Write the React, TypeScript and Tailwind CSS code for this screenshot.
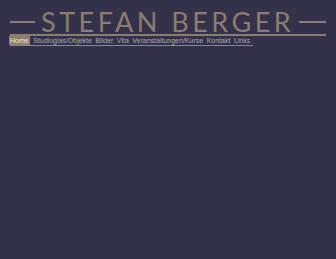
export default function App() {
  const nav = [
    "Home",
    "Studioglas/Objekte",
    "Bilder",
    "Vita",
    "Veranstaltungen/Kurse",
    "Kontakt",
    "Links",
  ];

  return (
    <div className="min-h-[259px] w-full bg-[#34324a] pl-[10px] pt-[9px]">
      <div className="w-[316px]">
        <div className="flex h-[25px] items-center">
          <div className="h-[2px] w-[25px] shrink-0 bg-[#8c7e6e]" />
          <h1
            className="ml-[6px] whitespace-nowrap text-[27px] font-normal leading-none tracking-[3.5px] text-[#8c7e6e]"
            style={{ fontFamily: "Lato, sans-serif" }}
          >
            STEFAN BERGER
          </h1>
          <div className="ml-auto h-[2px] w-[27px] shrink-0 bg-[#8c7e6e]" />
        </div>
        <div className="h-[2px] w-full bg-[#8c7e6e]" />
      </div>
      <nav
        className="flex w-[243px] gap-[3.5px] whitespace-nowrap border-b border-[#8a8596] text-[7px] leading-[9px] text-[#aaa6ba]"
        style={{ fontFamily: '"Liberation Sans", sans-serif' }}
      >
        {nav.map((item, i) => (
          <a
            key={item}
            className={
              i === 0
                ? "-ml-[1px] bg-[#8c7e6e] px-[1px] text-[#e8e4ea]"
                : ""
            }
          >
            {item}
          </a>
        ))}
      </nav>
    </div>
  );
}
